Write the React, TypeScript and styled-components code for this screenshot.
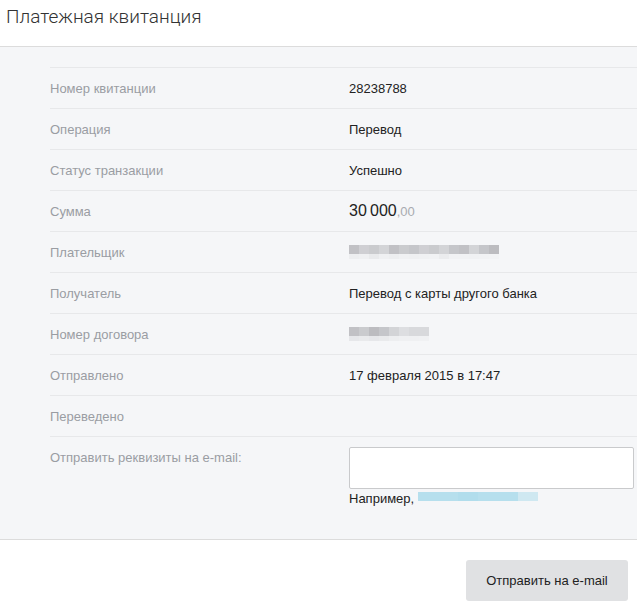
import React from "react";
import styled, { createGlobalStyle } from "styled-components";

const GlobalStyle = createGlobalStyle`
    body {
        margin: 0;
        background: #fff;
        font-family: "Liberation Sans", Arial, sans-serif;
    }
`;

const Page = styled.div`
    width: 637px;
    display: flex;
    flex-direction: column;
`;

const Header = styled.div`
    border-bottom: 1px solid #dcdcdc;
    padding: 5px 6px 0;
    box-sizing: border-box;
    height: 47px;
`;

const Title = styled.h1`
    margin: 0;
    font-family: Roboto, "Liberation Sans", sans-serif;
    font-weight: 300;
    font-size: 19px;
    line-height: 24px;
    color: #333;
`;

const Panel = styled.div`
    background: #f5f6f8;
    border-bottom: 1px solid #dcdcdc;
    padding: 20px 0 0 50px;
`;

const Row = styled.div<{ tall?: boolean }>`
    display: grid;
    grid-template-columns: 299px 1fr;
    align-items: ${props => props.tall ? "start" : "center"};
    height: ${props => props.tall ? "auto" : "40px"};
    padding: ${props => props.tall ? "10px 0 33px" : "0"};
    border-top: 1px solid #e7e8ea;
    font-size: 13px;
`;

const Label = styled.div<{ tall?: boolean }>`
    color: #9a9da3;
    padding-top: ${props => props.tall ? "3px" : "0"};
`;

const Value = styled.div`
    color: #222;
`;

const Amount = styled.span`
    font-size: 16px;
    color: #222;
`;

const Cents = styled.span`
    font-size: 13px;
    color: #a8abb0;
`;

const MosaicBox = styled.div`
    display: flex;
    flex-direction: column;
`;

const MosaicLine = styled.div`
    display: flex;
`;

const Block = styled.span<{ w: number; h: number }>`
    display: block;
    width: ${props => props.w}px;
    height: ${props => props.h}px;
`;

const Mosaic = ({ top, bottom, rgb }: { top: number[]; bottom: number[]; rgb: string }) => (
    <MosaicBox>
        <MosaicLine>
            {top.map((a, i) => (
                <Block key={i} w={10} h={9} style={{ background: `rgba(${rgb},${a})` }} />
            ))}
        </MosaicLine>
        <MosaicLine>
            {bottom.map((a, i) => (
                <Block key={i} w={10} h={5} style={{ background: `rgba(${rgb},${a})` }} />
            ))}
        </MosaicLine>
    </MosaicBox>
);

const EmailBox = styled.div`
    display: flex;
    flex-direction: column;
`;

const EmailInput = styled.input`
    box-sizing: border-box;
    width: 285px;
    height: 42px;
    border: 1px solid #c9cacc;
    border-radius: 2px;
    background: #fff;
    outline: none;
    margin-bottom: 2px;
`;

const Hint = styled.div`
    display: flex;
    align-items: center;
    gap: 4px;
    color: #222;
    font-size: 13px;
`;

const Footer = styled.div`
    display: flex;
    justify-content: flex-end;
    padding: 20px 9px 0 0;
`;

const Button = styled.button`
    width: 162px;
    height: 41px;
    border: none;
    border-radius: 3px;
    background: #e0e1e3;
    color: #222;
    font-family: "Liberation Sans", Arial, sans-serif;
    font-size: 13px;
    cursor: pointer;
`;

const rows: [string, React.ReactNode][] = [
    ["Номер квитанции", "28238788"],
    ["Операция", "Перевод"],
    ["Статус транзакции", "Успешно"],
    ["Сумма", <><Amount>30&#8239;000</Amount><Cents>,00</Cents></>],
    ["Плательщик", <Mosaic rgb="150,150,155"
        top={[0.55, 0.4, 0.45, 0.35, 0.55, 0.45, 0.5, 0.4, 0.45, 0.35, 0.5, 0.55, 0.35, 0.5, 0.6]}
        bottom={[0.08, 0.06, 0.12, 0.06, 0.08, 0.05, 0.06, 0.05, 0.04, 0.1, 0.04, 0.04, 0.05, 0.04, 0.03]} />],
    ["Получатель", "Перевод с карты другого банка"],
    ["Номер договора", <Mosaic rgb="150,150,155"
        top={[0.55, 0.45, 0.6, 0.5, 0.35, 0.25, 0.3, 0.3]}
        bottom={[0.15, 0.12, 0.15, 0.12, 0.08, 0.06, 0.06, 0.05]} />],
    ["Отправлено", "17 февраля 2015 в 17:47"],
    ["Переведено", ""],
];

const App = () => {
    return (
        <Page>
            <GlobalStyle />
            <Header>
                <Title>Платежная квитанция</Title>
            </Header>
            <Panel>
                {rows.map(([label, value]) => (
                    <Row key={label}>
                        <Label>{label}</Label>
                        <Value>{value}</Value>
                    </Row>
                ))}
                <Row tall>
                    <Label tall>Отправить реквизиты на e-mail:</Label>
                    <EmailBox>
                        <EmailInput type="text" />
                        <Hint>
                            Например,
                            <Mosaic rgb="120,200,225"
                                top={[0.5, 0.5, 0.5, 0.5, 0.55, 0.55, 0.5, 0.5, 0.5, 0.5, 0.3, 0.3]}
                                bottom={[0, 0, 0, 0, 0, 0, 0, 0, 0, 0, 0, 0]} />
                        </Hint>
                    </EmailBox>
                </Row>
            </Panel>
            <Footer>
                <Button>Отправить на e-mail</Button>
            </Footer>
        </Page>
    );
};

export default App;
